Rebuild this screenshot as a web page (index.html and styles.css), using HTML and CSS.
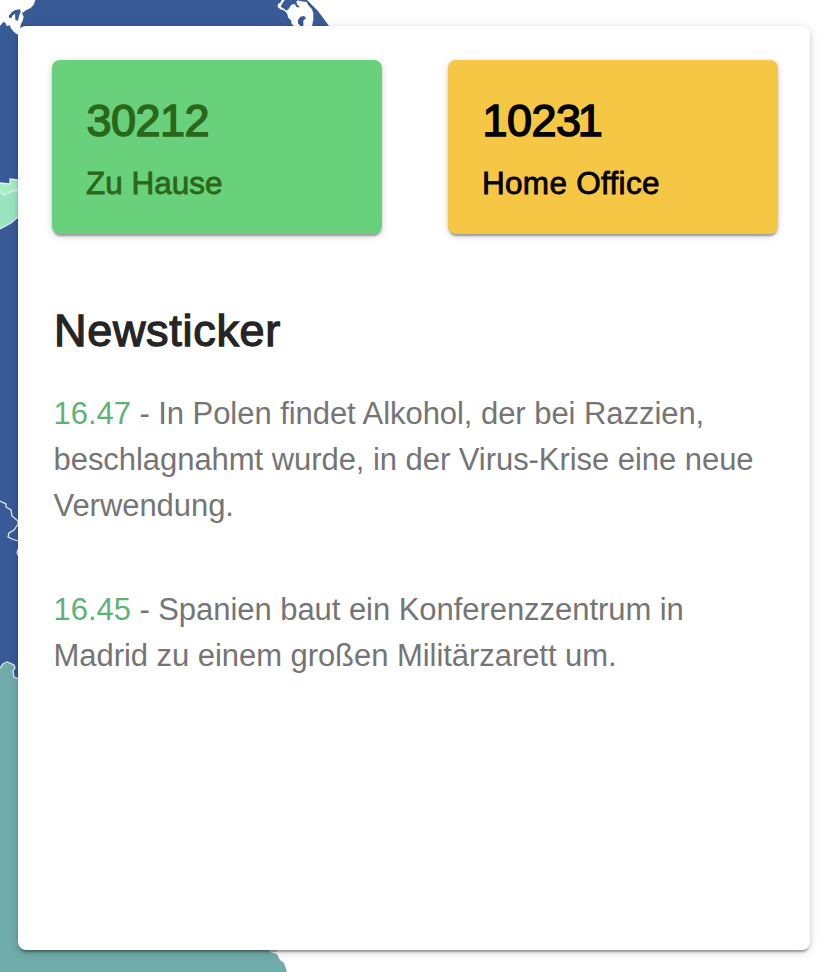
FILE: index.html
```
<!DOCTYPE html>
<html lang="de">
<head>
<meta charset="utf-8">
<title>Newsticker</title>
<link rel="stylesheet" href="styles.css">
</head>
<body>
<svg class="map" viewBox="0 0 836 972" aria-hidden="true">
  <path fill="#385a97" d="M0 0H307L318 11L329 26V690H0Z"/>
  <g transform="scale(.333333)">
    <path fill="#fff" d="M0 0H106L101 14L92 24L78 31L66 40L71 50L68 62L62 74L60 92L52 104L42 96L32 84L30 76L20 78L16 68L10 66L0 78Z"/>
    <path fill="#385a97" d="M26 48L36 36L46 30L60 28L62 36L57 48L54 62L46 60L45 42L39 45L34 54L28 54Z"/>
  </g>
  <g transform="translate(272 0) scale(.333333)">
    <path fill="#fff" d="M29 0L25 8L18 12L17 20L25 28L38 32L46 42L48 52L58 62L58 70L66 79H86L78 70V60L85 50L96 48L102 54L94 62V79H120L124 60V40L120 28L108 14L104 6L88 4L76 1L73 6L76 14L84 22L74 22L68 12L58 14L50 26L44 32L36 26L26 20L30 12L38 0Z"/>
  </g>
  <path fill="#a5efc0" d="M0 183L10 184V179L18 180V197L0 194Z"/>
  <path fill="#9ae5bf" d="M0 191L4 195L12 191L18 192V217L11 223L0 229Z"/>
  <path class="border" d="M0 183L10 184V179L18 180M0 191L4 195L12 191L18 190M0 229L11 223L18 217M0 501L6 504V507L11 510L12 516L18 521V524L14 530L9 533L8 537L12 539L18 541M18 549L17 553L19 557"/>
  <path fill="#70aca9" d="M0 668L4 664L8 663L14 665L15 668L13 671L14 677L19 679V700H270V952L277 954L280 960L284 963L287 972H0Z"/>
  <path class="border" d="M0 668L3 664L7 662L14 665L15 668L13 671L14 677L19 679"/>
  <path fill="#ccc" d="M268 948H276L277 952H270Z"/>
</svg>
<main class="panel">
  <section class="stats">
    <article class="stat stat-home">
      <div class="value">30212</div>
      <div class="label">Zu Hause</div>
    </article>
    <article class="stat stat-office">
      <div class="value">102<span class="kern">3</span>1</div>
      <div class="label">Home Office</div>
    </article>
  </section>
  <h1>Newsticker</h1>
  <p><time>16.47</time> - In Polen findet Alkohol, der bei Razzien,<br>beschlagnahmt wurde, in der Virus-Krise eine neue<br>Verwendung.</p>
  <p><time>16.45</time> - Spanien baut ein Konferenzzentrum in<br>Madrid zu einem großen Militärzarett um.</p>
</main>
</body>
</html>
```
FILE: styles.css
```
* { box-sizing: border-box; }
body {
  margin: 0;
  width: 836px;
  height: 972px;
  padding: 26px 26px 22px 18px;
  overflow: hidden;
  background: #fff;
  font-family: "Liberation Sans", Arial, sans-serif;
}
.map {
  position: absolute;
  left: 0;
  top: 0;
  width: 836px;
  height: 972px;
}
.border { fill: none; stroke: #e3ecf6; stroke-width: 1.3; }
.panel {
  position: relative;
  height: 924px;
  padding: 34px 32px 0 34px;
  border-radius: 8px;
  background: #fff;
  box-shadow: 0 4px 2px -2px rgba(0,0,0,.2), 0 2px 2px rgba(0,0,0,.14), 0 2px 6px rgba(0,0,0,.12), 0 2px 14px rgba(0,0,0,.08);
}
.stats { display: flex; gap: 66px; }
.stat {
  width: 330px;
  height: 174px;
  padding: 34px;
  border-radius: 8px;
  box-shadow: 0 4px 2px -2px rgba(0,0,0,.2), 0 2px 2px rgba(0,0,0,.14), 0 2px 6px rgba(0,0,0,.12), 0 2px 12px rgba(0,0,0,.06);
}
.stat-home { background: #69d17c; color: #2b6719; }
.stat-office { background: #f6c745; color: #000; }
.value { padding-left: .5px; font-size: 45px; line-height: 54px; letter-spacing: -.5px; -webkit-text-stroke: 1.5px currentColor; }
.kern { letter-spacing: -3.5px; }
.label { margin-top: 12px; font-size: 31.5px; line-height: 46px; -webkit-text-stroke: .8px currentColor; }
.stat-office .label { letter-spacing: .3px; }
h1 {
  margin: 70px 0 0 2px;
  font-size: 45px;
  line-height: 54px;
  font-weight: 400;
  letter-spacing: .7px;
  color: #252525;
  -webkit-text-stroke: 1.3px currentColor;
}
p {
  margin: 33px 0 0 1.5px;
  font-size: 31px;
  line-height: 46px;
  letter-spacing: -.05px;
  color: #757575;
  white-space: nowrap;
}
p + p { margin-top: 58px; }
time { color: #5fb276; }
```
